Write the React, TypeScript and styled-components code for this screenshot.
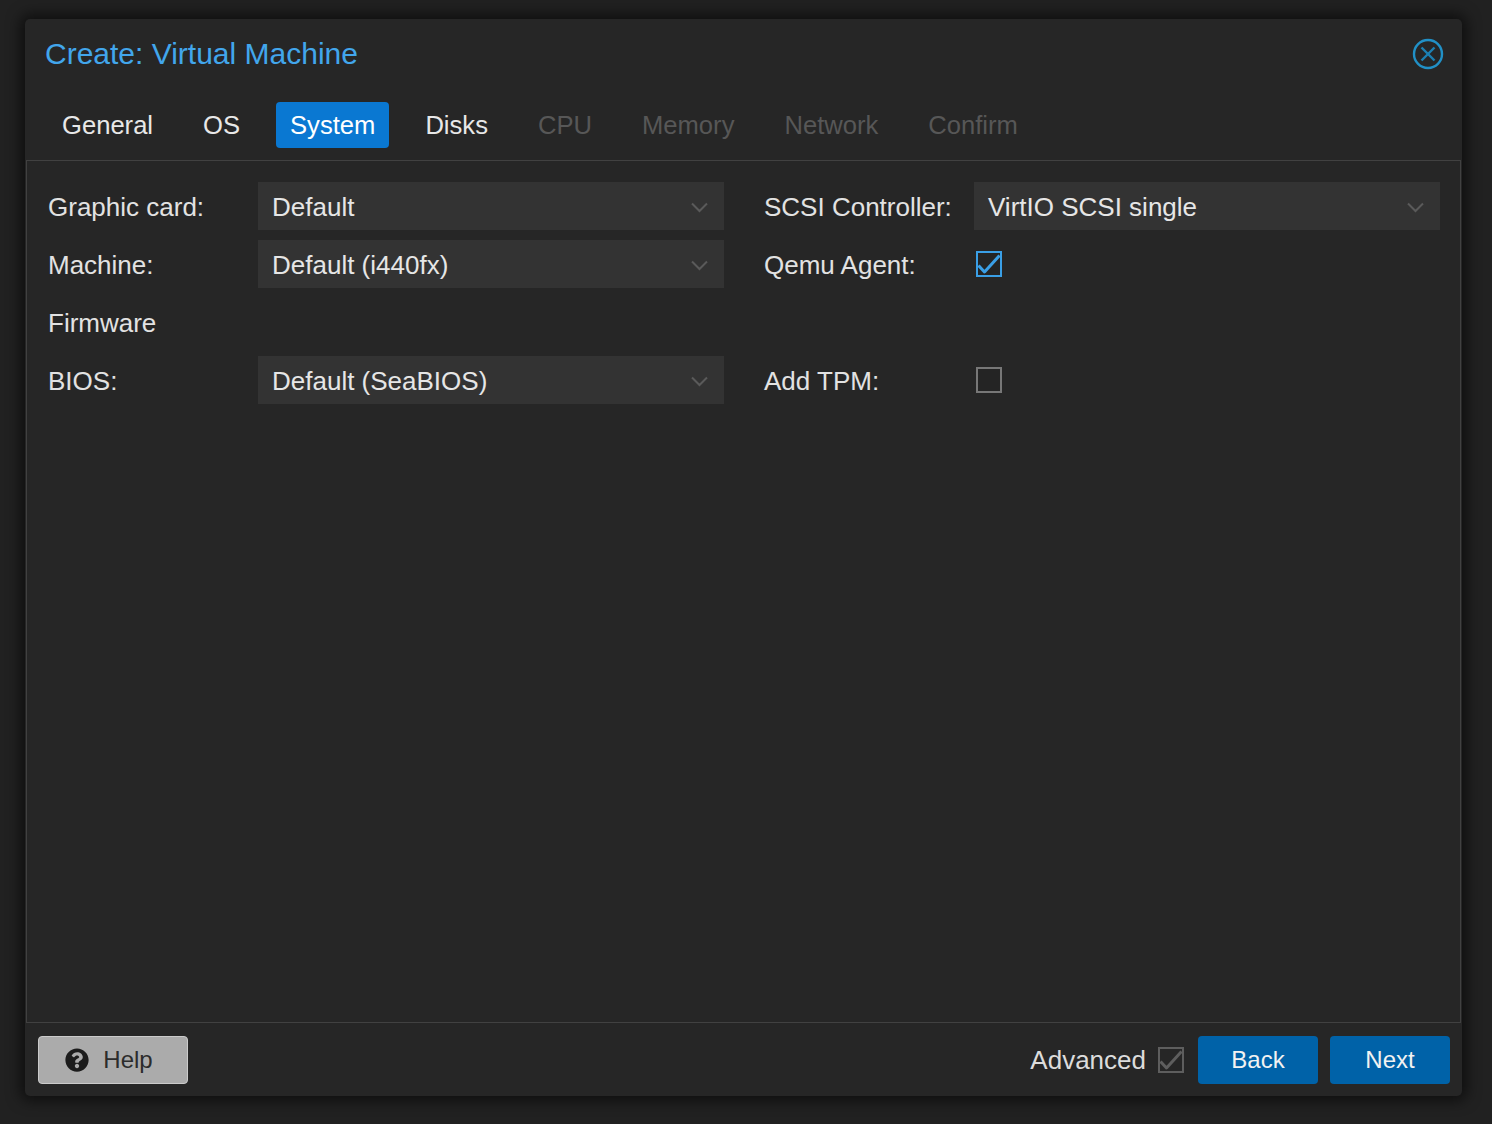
import React from "react";
import styled, { createGlobalStyle } from "styled-components";
import { FaQuestionCircle } from "react-icons/fa";

const Global = createGlobalStyle`
  html, body { margin: 0; padding: 0; background: #212121; }
  body { font-family: "Liberation Sans", Arial, sans-serif; }
  * { box-sizing: border-box; }
`;

const Page = styled.div`
  width: 1492px;
  height: 1124px;
  padding: 19px 0 0 25px;
  background: #212121;
`;

const Dialog = styled.div`
  width: 1437px;
  height: 1077px;
  background: #262626;
  border-radius: 5px;
  box-shadow: 0 0 14px 5px rgba(0, 0, 0, 0.55);
  display: flex;
  flex-direction: column;
`;

const Header = styled.div`
  padding: 19px 18px 12px 20px;
  display: flex;
  flex-direction: column;
  gap: 32px;
`;

const TitleRow = styled.div`
  height: 32px;
  display: flex;
  align-items: center;
  justify-content: space-between;
`;

const Title = styled.div`
  font-size: 30px;
  color: #42a6ec;
  line-height: 32px;
`;

const CloseBtn = styled.div`
  width: 32px;
  height: 32px;
  display: flex;
`;

const Tabs = styled.div`
  display: flex;
  gap: 22px;
  padding-left: 3px;
`;

const Tab = styled.div<{ $state: "active" | "normal" | "disabled" }>`
  height: 46px;
  padding: 0 14px;
  display: flex;
  align-items: center;
  font-size: 25.6px;
  border-radius: 4px;
  background: ${(p) => (p.$state === "active" ? "#0a78d2" : "transparent")};
  color: ${(p) =>
    p.$state === "active" ? "#ffffff" : p.$state === "normal" ? "#e8e8e8" : "#575757"};
`;

const Panel = styled.div`
  flex: 1;
  margin: 0 1px;
  border: 1px solid #414141;
  padding: 21px 21px;
  display: flex;
  gap: 40px;
  align-items: flex-start;
`;

const Column = styled.div`
  display: flex;
  flex-direction: column;
  gap: 10px;
  width: 676px;
`;

const Row = styled.div`
  height: 48px;
  display: flex;
  align-items: center;
`;

const Label = styled.div`
  width: 210px;
  font-size: 26px;
  color: #e2e2e2;
  padding-top: 2px;
`;

const Select = styled.div`
  width: 466px;
  height: 48px;
  background: #333333;
  display: flex;
  align-items: center;
  justify-content: space-between;
  padding: 2px 16px 0 14px;
  font-size: 26px;
  color: #e6e6e6;
`;

const CheckWrap = styled.div`
  margin-left: 2px;
  width: 26px;
  height: 26px;
  display: flex;
`;

const Footer = styled.div`
  padding: 13px 12px 12px 13px;
  display: flex;
  align-items: center;
`;

const HelpButton = styled.div`
  width: 150px;
  height: 48px;
  background: #ababab;
  border: 1px solid #cbcbcb;
  border-radius: 4px;
  display: flex;
  align-items: center;
  justify-content: center;
  gap: 14px;
  padding-right: 8px;
  font-size: 24px;
  color: #2c2c2c;
`;

const Spacer = styled.div`
  flex: 1;
`;

const Advanced = styled.div`
  display: flex;
  align-items: center;
  gap: 12px;
  font-size: 26px;
  color: #dcdcdc;
  margin-right: 14px;
`;

const PrimaryButton = styled.div`
  width: 120px;
  height: 48px;
  background: #0062a8;
  border-radius: 4px;
  display: flex;
  align-items: center;
  justify-content: center;
  font-size: 24px;
  color: #f2f2f2;
  & + & {
    margin-left: 12px;
  }
`;

const Chevron = () => (
  <svg width="17" height="11" viewBox="0 0 17 11">
    <polyline points="1,1.5 8.5,9 16,1.5" fill="none" stroke="#5a5a5a" strokeWidth="2" />
  </svg>
);

const Checkbox = ({ checked, color, bg }: { checked: boolean; color: string; bg?: string }) => (
  <svg width="26" height="26" viewBox="0 0 26 26">
    <rect x="1" y="1" width="24" height="24" fill={bg ?? "#242424"} stroke={color} strokeWidth="2" />
    {checked && (
      <polyline
        points="2.5,14.5 8.5,21 23.5,4.5"
        fill="none"
        stroke={color}
        strokeWidth="3"
        strokeLinejoin="round"
      />
    )}
  </svg>
);

const CloseIcon = () => (
  <svg width="32" height="32" viewBox="0 0 32 32">
    <circle cx="16" cy="16" r="14" fill="none" stroke="#2190c6" strokeWidth="2.4" />
    <line x1="9.5" y1="9.5" x2="22.5" y2="22.5" stroke="#1c80b2" strokeWidth="2.4" />
    <line x1="22.5" y1="9.5" x2="9.5" y2="22.5" stroke="#1c80b2" strokeWidth="2.4" />
  </svg>
);

const tabs: { name: string; state: "active" | "normal" | "disabled" }[] = [
  { name: "General", state: "normal" },
  { name: "OS", state: "normal" },
  { name: "System", state: "active" },
  { name: "Disks", state: "normal" },
  { name: "CPU", state: "disabled" },
  { name: "Memory", state: "disabled" },
  { name: "Network", state: "disabled" },
  { name: "Confirm", state: "disabled" },
];

export default function App() {
  return (
    <Page>
      <Global />
      <Dialog>
        <Header>
          <TitleRow>
            <Title>Create: Virtual Machine</Title>
            <CloseBtn>
              <CloseIcon />
            </CloseBtn>
          </TitleRow>
          <Tabs>
            {tabs.map((t) => (
              <Tab key={t.name} $state={t.state}>
                {t.name}
              </Tab>
            ))}
          </Tabs>
        </Header>
        <Panel>
          <Column>
            <Row>
              <Label>Graphic card:</Label>
              <Select>
                Default
                <Chevron />
              </Select>
            </Row>
            <Row>
              <Label>Machine:</Label>
              <Select>
                Default (i440fx)
                <Chevron />
              </Select>
            </Row>
            <Row>
              <Label>Firmware</Label>
            </Row>
            <Row>
              <Label>BIOS:</Label>
              <Select>
                Default (SeaBIOS)
                <Chevron />
              </Select>
            </Row>
          </Column>
          <Column>
            <Row>
              <Label>SCSI Controller:</Label>
              <Select>
                VirtIO SCSI single
                <Chevron />
              </Select>
            </Row>
            <Row>
              <Label>Qemu Agent:</Label>
              <CheckWrap>
                <Checkbox checked color="#3a9fe6" />
              </CheckWrap>
            </Row>
            <Row />
            <Row>
              <Label>Add TPM:</Label>
              <CheckWrap>
                <Checkbox checked={false} color="#777777" />
              </CheckWrap>
            </Row>
          </Column>
        </Panel>
        <Footer>
          <HelpButton>
            <FaQuestionCircle size={24} color="#1c1c1c" />
            Help
          </HelpButton>
          <Spacer />
          <Advanced>
            Advanced
            <Checkbox checked color="#5e5e5e" bg="#262626" />
          </Advanced>
          <PrimaryButton>Back</PrimaryButton>
          <PrimaryButton>Next</PrimaryButton>
        </Footer>
      </Dialog>
    </Page>
  );
}
